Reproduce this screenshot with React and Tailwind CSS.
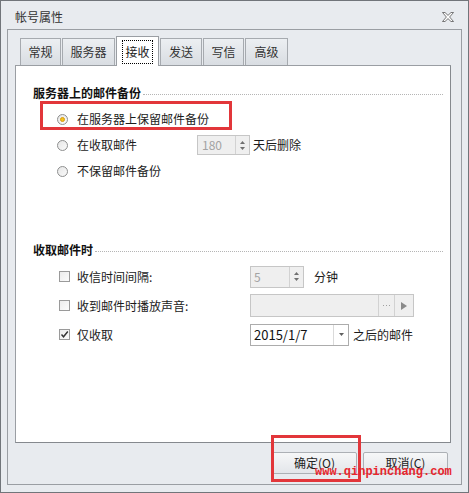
import React from 'react'

const TABS = [
  { label: '常规', w: 'w-[41px]', ml: 'ml-0' },
  { label: '服务器', w: 'w-[53px]', ml: 'ml-px' },
  { label: '接收', w: 'w-[43px]', ml: 'ml-px', active: true },
  { label: '发送', w: 'w-[42px]', ml: 'ml-px' },
  { label: '写信', w: 'w-[41px]', ml: 'ml-px' },
  { label: '高级', w: 'w-[43px]', ml: 'ml-px' },
]

function Radio({ checked }) {
  return (
    <span className="relative flex items-center justify-center w-[11px] h-[11px] rounded-full border border-[#8e8f8f] bg-gradient-to-br from-[#e6e6e6] to-[#fafafa] shrink-0">
      {checked && <span className="w-[5px] h-[5px] rounded-full bg-[#f3c51c] border border-[#d99a12]" />}
    </span>
  )
}

function Check({ checked }) {
  return (
    <span className="flex items-center justify-center w-[11px] h-[11px] border border-[#9a9a9a] bg-gradient-to-br from-[#ececec] to-[#fbfbfb] shrink-0">
      {checked && (
        <svg width="9" height="9" viewBox="0 0 9 9">
          <path d="M1.5 4.5 L3.5 6.8 L7.8 1.5" stroke="#333" strokeWidth="1.4" fill="none" />
        </svg>
      )}
    </span>
  )
}

function SpinArrows() {
  return (
    <span className="flex flex-col items-center justify-center gap-[3px] w-[14px] h-full border-l border-[#d2d2d2]">
      <svg width="5" height="3" viewBox="0 0 5 3"><path d="M0 3 L2.5 0 L5 3 Z" fill="#707070" /></svg>
      <svg width="5" height="3" viewBox="0 0 5 3"><path d="M0 0 L2.5 3 L5 0 Z" fill="#707070" /></svg>
    </span>
  )
}

function SectionHeader({ children }) {
  return (
    <div className="flex items-center h-[16px] pl-[17px] pr-[7px]">
      <span className="font-bold text-[#111] text-[12px]">{children}</span>
      <span className="flex-1 ml-[2px] mt-[2px] border-t border-dotted border-[#b5b5b5]" />
    </div>
  )
}

export default function App() {
  return (
    <div className="relative w-[469px] h-[493px] border border-[#71757a] bg-[#e8ebef] flex flex-col font-['Noto_Sans_CJK_SC','Liberation_Sans',sans-serif] text-[12px] text-[#1b1b1b] leading-none">
      {/* title bar */}
      <div className="flex items-center h-[28px] pl-[14px] pr-[14px] pt-[3px]">
        <span className="text-[12px] text-[#333]">帐号属性</span>
        <svg className="ml-auto" width="12" height="10" viewBox="0 0 12 10">
          <path d="M0.5 0.5 L3 0.5 L6 3.4 L9 0.5 L11.5 0.5 L7.6 5 L11.5 9.5 L9 9.5 L6 6.6 L3 9.5 L0.5 9.5 L4.4 5 Z" fill="#fff" stroke="#555" strokeWidth="0.8" />
        </svg>
      </div>

      {/* frame */}
      <div className="mx-[6px] h-[456px] border border-[#9a9ea3] flex flex-col">
        <div className="flex items-end h-[35px] pl-[12px]">
          {TABS.map((t) =>
            t.active ? (
              <div key={t.label} className={`${t.w} ${t.ml} relative z-10 -mb-px h-[30px] bg-white border border-b-0 border-[#9a9ea3] flex items-center justify-center`}>
                <span className="px-[2px] py-[5px] border border-dotted border-black text-[12px]">{t.label}</span>
              </div>
            ) : (
              <div key={t.label} className={`${t.w} ${t.ml} h-[27px] bg-gradient-to-b from-[#eceff2] to-[#d9dde2] border border-b-0 border-[#a6aaaf] flex items-center justify-center text-[#333]`}>
                {t.label}
              </div>
            )
          )}
        </div>

        {/* panel */}
        <div className="ml-[7px] w-[436px] h-[378px] bg-white border border-[#9a9ea3] border-r-[#85898e] border-b-[#85898e] pt-[19px]">
          <SectionHeader>服务器上的邮件备份</SectionHeader>

          <div className="mt-[5px]">
            <div className="flex items-center h-[26px] pl-[41px]">
              <Radio checked />
              <span className="ml-[9px]">在服务器上保留邮件备份</span>
            </div>
            <div className="flex items-center h-[26px] pl-[41px]">
              <Radio />
              <span className="ml-[9px] w-[120px]">在收取邮件</span>
              <div className="flex items-center w-[53px] h-[20px] border border-[#c6c6c6] bg-[#efefef]">
                <span className="flex-1 pl-[4px] text-[#a3a3a3]">180</span>
                <SpinArrows />
              </div>
              <span className="ml-[3px]">天后删除</span>
            </div>
            <div className="flex items-center h-[26px] pl-[41px]">
              <Radio />
              <span className="ml-[9px]">不保留邮件备份</span>
            </div>
          </div>

          <div className="mt-[58px]">
            <SectionHeader>收取邮件时</SectionHeader>
          </div>

          <div className="mt-[4px]">
            <div className="flex items-center h-[29px] pl-[43px]">
              <Check />
              <span className="ml-[7px] w-[173px]">收信时间间隔:</span>
              <div className="flex items-center w-[54px] h-[22px] border border-[#c6c6c6] bg-[#efefef]">
                <span className="flex-1 pl-[3px] text-[#a3a3a3]">5</span>
                <SpinArrows />
              </div>
              <span className="ml-[10px]">分钟</span>
            </div>
            <div className="flex items-center h-[29px] pl-[43px]">
              <Check />
              <span className="ml-[7px] w-[173px]">收到邮件时播放声音:</span>
              <div className="flex items-center w-[164px] h-[23px] border border-[#c6c6c6] bg-[#efefef]">
                <span className="flex-1" />
                <span className="flex items-center justify-center gap-[2px] w-[16px] h-full border-l border-[#d2d2d2]">
                  <span className="w-px h-px bg-[#a0a0a0]" />
                  <span className="w-px h-px bg-[#a0a0a0]" />
                  <span className="w-px h-px bg-[#a0a0a0]" />
                </span>
                <span className="flex items-center justify-center w-[19px] h-full border-l border-[#d2d2d2]">
                  <svg width="6" height="8" viewBox="0 0 6 8"><path d="M0 0 L6 4 L0 8 Z" fill="#8a8a8a" /></svg>
                </span>
              </div>
            </div>
            <div className="flex items-center h-[29px] pl-[43px]">
              <Check checked />
              <span className="ml-[7px] w-[173px]">仅收取</span>
              <div className="flex items-center w-[99px] h-[22px] border border-[#acacac] bg-white">
                <span className="flex-1 pl-[3px] text-[13px] text-[#111]">2015/1/7</span>
                <span className="flex items-center justify-center w-[15px] h-full border-l border-[#dadada]">
                  <svg width="5" height="3" viewBox="0 0 5 3"><path d="M0 0 L2.5 3 L5 0 Z" fill="#606060" /></svg>
                </span>
              </div>
              <span className="ml-[4px]">之后的邮件</span>
            </div>
          </div>
        </div>

        {/* buttons */}
        <div className="flex justify-end gap-[6px] mt-[9px] pr-[13px]">
          <button className="w-[85px] h-[22px] border border-[#acb0b5] rounded-[2px] bg-gradient-to-b from-[#f6f7f8] to-[#e3e6ea] text-[12px] text-[#222]">确定(O)</button>
          <button className="w-[85px] h-[22px] border border-[#acb0b5] rounded-[2px] bg-gradient-to-b from-[#f6f7f8] to-[#e3e6ea] text-[12px] text-[#222]">取消(C)</button>
        </div>
      </div>

      {/* annotation overlays */}
      <div className="absolute left-[39px] top-[100px] w-[192px] h-[29px] border-[3px] border-[#e2363a]" />
      <div className="absolute left-[270px] top-[434px] w-[90px] h-[47px] border-[3px] border-[#e2363a]" />
      <span className="absolute left-[314px] top-[465px] font-['Liberation_Mono',monospace] font-bold text-[12px] text-[#e8262d] leading-none">www.qinpinchang.com</span>
    </div>
  )
}
